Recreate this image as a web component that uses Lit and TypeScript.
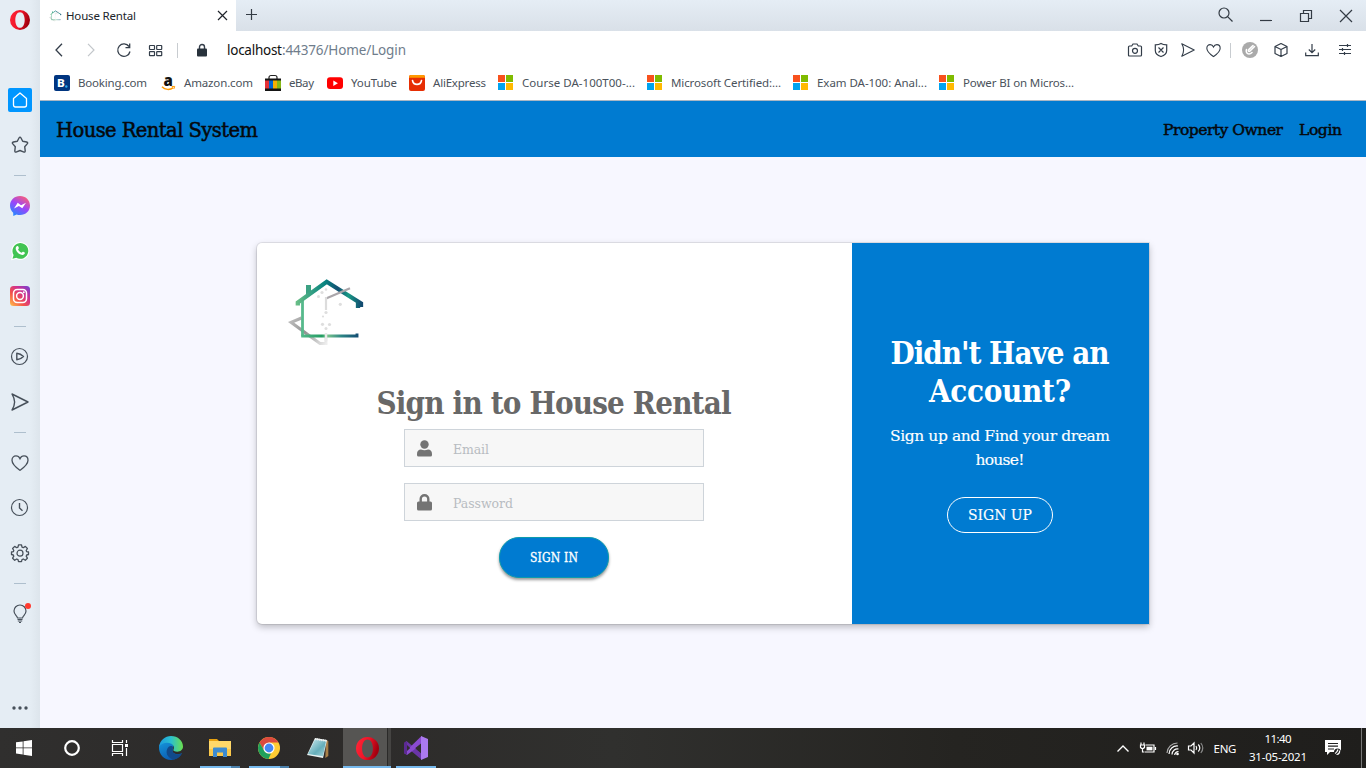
import { LitElement, html, svg, css } from "lit";
import { customElement, property } from "lit/decorators.js";

/* Text run whose tracking is computed so that it fills a given width. */
@customElement("fit-text")
class FitText extends LitElement {
  @property({ type: Number }) w = 100;
  @property() text = "";
  static styles = css`
    :host { display: inline-block; white-space: nowrap; flex: none; text-align: left; }
  `;
  render() {
    return html`<span>${this.text}</span>`;
  }
  updated() {
    const span = this.renderRoot.querySelector("span")!;
    this.style.width = `${this.w}px`;
    span.style.letterSpacing = "0px";
    const natural = span.getBoundingClientRect().width;
    const gaps = Math.max(1, this.text.length - 1);
    span.style.letterSpacing = `${(this.w - natural) / gaps}px`;
  }
}

const fit = (text: string, w: number) => html`<fit-text .text=${text} .w=${w}></fit-text>`;

const icon = (w: number, h: number, body: unknown) =>
  html`<svg class="i" width=${w} height=${h} viewBox="0 0 ${w} ${h}" fill="none" stroke="currentColor" stroke-width="1.2">${body}</svg>`;

const opera = (s: number) => html`<svg class="i" width=${s} height=${s} viewBox="0 0 20 20">
  <defs>
    <linearGradient id="op" x1="0" x2="1" y1="0" y2="0.3"><stop offset="0" stop-color="#ff2638" /><stop offset=".55" stop-color="#f01428" /><stop offset="1" stop-color="#a3000f" /></linearGradient>
  </defs>
  <path fill="url(#op)" fill-rule="evenodd" d="M10 0a10 10 0 1 0 0 20a10 10 0 1 0 0-20zM10 2.2c3 0 4.700 3.500 4.700 7.800s-1.700 7.800-4.700 7.800s-4.700-3.500-4.700-7.800s1.700-7.800 4.700-7.800z" />
</svg>`;

const heart = (s: number) =>
  html`<svg class="i" width=${s} height=${s} viewBox="0 0 18 18" fill="none" stroke="currentColor" stroke-width="1.3"><path d="M9 16.3C6 14.2 1 10.8 1 6.3C1 3.6 2.7 1.9 5 1.9c1.900 0 3.300 1.200 4 2.800C9.700 3.100 11.100 1.900 13 1.900c2.300 0 4 1.700 4 4.400c0 4.500-5 7.900-8 10z" /></svg>`;

const plane = (s: number) =>
  html`<svg class="i" width=${s} height=${s} viewBox="0 0 18 18" fill="none" stroke="currentColor" stroke-width="1.4" stroke-linejoin="round"><path d="M1 1L17 9L1 17C4.500 11 4.500 7 1 1z" /></svg>`;

const msLogo = html`<svg class="i" width="16" height="16" viewBox="0 0 16 16">
  <path fill="#f8511d" d="M0 0h7v7h-7z" /><path fill="#7fbb00" d="M8 0h7v7h-7z" />
  <path fill="#00a3ef" d="M0 8h7v7h-7z" /><path fill="#ffb900" d="M8 8h7v7h-7z" />
</svg>`;

const booking = html`<svg class="i" width="16" height="16" viewBox="0 0 16 16">
  <rect width="16" height="16" rx="2" fill="#003580" />
  <text x="3.200" y="12.300" font-size="11.500" font-weight="900" font-family="Roboto, sans-serif" fill="#fff">B</text>
  <circle cx="12.300" cy="11.500" r="1.200" fill="#2aa8ee" />
</svg>`;

const amazon = html`<svg class="i" width="16" height="16" viewBox="0 0 16 16">
  <text x="3.500" y="10.600" font-size="15" font-weight="800" font-family="Open Sans, sans-serif" fill="#111">a</text>
  <path d="M2 11.800C5 15 10 15.200 13.300 12.600" fill="none" stroke="#f90" stroke-width="1.500" /><path d="M11.700 11.500l3-.1l-.8 2.500" fill="none" stroke="#f90" />
</svg>`;

const ebay = html`<svg class="i" width="16" height="16" viewBox="0 0 16 16">
  <path d="M4 4V2.500a2 2 0 0 1 2-2h4a2 2 0 0 1 2 2v1.500" fill="none" stroke="#222" stroke-width="1.200" />
  <path d="M0 3.500h16v12.500h-16z" fill="#151515" />
  <path d="M0 5.500h4v8h-4z" fill="#e53238" /><path d="M4 5.500h4v8h-4z" fill="#0064d2" /><path d="M8 5.500h4v8h-4z" fill="#f5af02" /><path d="M12 5.500h4v8h-4z" fill="#86b817" />
</svg>`;

const youtube = html`<svg class="i" width="16" height="16" viewBox="0 0 16 16">
  <rect x="0" y="2.300" width="16" height="11.700" rx="3" fill="#f00" /><path d="M6.300 5.500l4.600 2.700l-4.600 2.700z" fill="#fff" />
</svg>`;

const ali = html`<svg class="i" width="16" height="16" viewBox="0 0 16 16">
  <rect width="16" height="16" rx="2" fill="#e62e04" /><path d="M0 2.800V2a2 2 0 0 1 2-2h12a2 2 0 0 1 2 2v.8z" fill="#ff9a00" />
  <path d="M3.500 5.500c1 5.200 8 5.200 9 0" fill="none" stroke="#fff" stroke-width="1.600" stroke-linecap="round" />
</svg>`;

const bookmarks: [unknown, string, number, number][] = [
  [booking, "Booking.com", 69, 106],
  [amazon, "Amazon.com", 69, 105],
  [ebay, "eBay", 25, 62],
  [youtube, "YouTube", 46, 82],
  [ali, "AliExpress", 53, 89],
  [msLogo, "Course DA-100T00-...", 113, 149],
  [msLogo, "Microsoft Certified:...", 110, 146],
  [msLogo, "Exam DA-100: Anal...", 110, 146],
  [msLogo, "Power BI on Micros...", 111, 140],
];

const house = (w: number, h: number) => html`<svg class="i" width=${w} height=${h} viewBox="287 277 80 72" fill="none">
  <defs>
    <linearGradient id="hr" gradientUnits="userSpaceOnUse" x1="297" y1="0" x2="363" y2="0"><stop offset="0" stop-color="#67bd86" /><stop offset=".42" stop-color="#078480" /><stop offset=".62" stop-color="#124f72" /><stop offset=".78" stop-color="#179a85" /><stop offset=".98" stop-color="#134a70" /></linearGradient>
    <linearGradient id="hb" gradientUnits="userSpaceOnUse" x1="301" y1="0" x2="359" y2="0"><stop offset="0" stop-color="#55b98b" /><stop offset=".36" stop-color="#229c62" /><stop offset=".45" stop-color="#7bc48c" /><stop offset=".7" stop-color="#2c8585" /><stop offset="1" stop-color="#124a72" /></linearGradient>
    <linearGradient id="hg" gradientUnits="userSpaceOnUse" x1="290" y1="320" x2="326" y2="344"><stop offset="0" stop-color="#bdbdbd" /><stop offset=".45" stop-color="#929292" /><stop offset="1" stop-color="#eee" /></linearGradient>
  </defs>
  <path d="M301.500 318L291 322.300L320 343.500H326V337" stroke="url(#hg)" stroke-width="3" />
  <path d="M308.500 295V285" stroke="#3ca183" stroke-width="5" />
  <path d="M302.500 300V336.300" stroke="#56b98c" stroke-width="2.800" />
  <path d="M301.200 336H357V333.500" stroke="url(#hb)" stroke-width="2.900" />
  <path d="M297.800 305.500V302.500L326.700 281.800L361 303.500V307M358 301V308" stroke="url(#hr)" stroke-width="4.300" />
  <path d="M326 298.500L350 288.300" stroke="#aaa6aa" stroke-width="2.200" />
  <path d="M326 297V310" stroke="#dcdcdc" stroke-width="2.200" />
  <g fill="#dedede"><circle cx="326" cy="289.500" r="1.300" /><circle cx="322" cy="292.500" r="1.600" /><circle cx="318.500" cy="296.500" r="1.500" /><circle cx="340.300" cy="304.300" r="1.600" /><circle cx="326" cy="312.500" r="1.600" /><circle cx="323" cy="316.500" r="1.100" /><circle cx="322.500" cy="324.300" r="1.600" /><circle cx="329.500" cy="324.500" r="1.600" /><circle cx="326" cy="328.500" r="1.500" /></g>
  <path d="M326 333V341" stroke="#e9e9e9" stroke-width="2.500" />
</svg>`;

const star = icon(18, 18, svg`<path stroke-width="1.400" stroke-linejoin="round" d="M8 2Q9 .3 10 2L11.700 5.300L15.600 6Q17.400 6.500 16.200 7.900L13.700 10.700L14.200 14.900Q14.100 16.700 12.400 15.900L9 14.500L5.600 15.900Q3.900 16.700 3.800 14.900L4.300 10.700L1.800 7.900Q.6 6.500 2.400 6L6.300 5.300z" />`);

const messenger = html`<svg class="i" width="22" height="22" viewBox="0 0 22 22">
  <defs><linearGradient id="ms" x1=".2" y1="1" x2=".8" y2="0"><stop offset="0" stop-color="#1f8cff" /><stop offset=".5" stop-color="#9a45fb" /><stop offset="1" stop-color="#ff6070" /></linearGradient></defs>
  <path fill="url(#ms)" d="M11 1C5.300 1 1 5.100 1 10.600c0 2.900 1.200 5.400 3.200 7.100L4.300 21l3.300-1.500c1.100.4 2.200.6 3.400.6c5.700 0 10-4.100 10-9.500S16.700 1 11 1z" />
  <path fill="#fff" d="M5 13.500L8.700 7.800L12 10.300L17 7.700L13.300 13.300L9.900 10.900z" />
</svg>`;

const whatsapp = html`<svg class="i" width="20" height="20" viewBox="0 0 20 20">
  <path fill="#fff" d="M1 19.200L2.300 14A9 9 0 1 1 6.300 18z" /><path fill="#42c453" d="M2.500 17.700L3.600 14A7.900 7.900 0 1 1 6.300 16.700z" />
  <path fill="#fff" d="M6.900 5.300c.7-.6 1.200-.3 1.400.3l.6 1.500c.1.500-.6 1-.8 1.300c.9 1.700 2 2.700 3.600 3.300l1-1c.4-.3 2 .6 2.200.9c.3 1-.8 2.300-2 2.400c-3.600.1-7.300-3.600-7.200-6.700c0-.8.600-1.600 1.200-2z" />
</svg>`;

const instagram = html`<svg class="i" width="20" height="20" viewBox="0 0 20 20">
  <defs><linearGradient id="ig" x1="0" y1="1" x2="1" y2="0"><stop offset="0" stop-color="#ffc44c" /><stop offset=".35" stop-color="#f4544a" /><stop offset=".65" stop-color="#cf3190" /><stop offset="1" stop-color="#6c43d8" /></linearGradient></defs>
  <rect width="20" height="20" rx="3.500" fill="url(#ig)" /><g fill="none" stroke="#fff" stroke-width="1.500"><rect x="3.500" y="3.500" width="13" height="13" rx="3.700" /><circle cx="10" cy="10" r="3.400" /></g><circle cx="13.800" cy="6.200" r="1" fill="#fff" />
</svg>`;

/* Eight-toothed cog: a wavy ring round a small hub. */
const gear = icon(18, 18, svg`<path stroke-width="1.300" stroke-linejoin="round" d="M7.500 .8h3l.5 2.300l1.300.6l2-1.300l2.100 2.100l-1.200 2l.5 1.200l1.800.3v2.500l-1.800.5l-.5 1.200l1.200 2l-2.100 2.100l-2-1.300l-1.300.6l-.5 2h-3l-.5-2l-1.300-.6l-2 1.300l-2.100-2.100l1.200-2l-.5-1.200L.5 10.500V8l1.800-.3l.5-1.200l-1.200-2l2.100-2.100l2 1.300l1.300-.6z" /><circle cx="9" cy="9.200" r="3" />`);

const taskWave = html`<svg class="i" width="26" height="26" viewBox="0 0 26 26">
  <defs>
    <linearGradient id="e1" x1="0" x2="1"><stop offset="0" stop-color="#1c9ae0" /><stop offset=".5" stop-color="#2bc0cf" /><stop offset="1" stop-color="#6be04e" /></linearGradient>
    <linearGradient id="e2" x1="0" y1="0" x2=".6" y2="1"><stop offset="0" stop-color="#1597dc" /><stop offset="1" stop-color="#0b58ae" /></linearGradient>
  </defs>
  <path fill="url(#e2)" d="M1 12C2 7 7 5.500 11 7c4 1.500 5 4 4 6c-1 2-1 5 3 6c3 .8 5-.4 6-.9C21.500 23 17 25 13 25C6 25 .6 19 1 12z" />
  <path fill="#114a8b" d="M10.500 12c-4 4.500-1.500 11 5 12.600c4-.6 7-3.500 8.300-6.200c-3.500 2-8.300 1.200-9.300-2.200c-.5-1.800.6-2.800.5-4.200c-.7-1.300-3-1.500-4.500 0z" />
  <path fill="url(#e1)" d="M1 12C2 5 7 1 13 1c7 0 12 5 12 10.500c0 4.500-5 6.300-9 4.400c-1.600-.8.600-1.600-.3-4.600C14.400 7.300 5 5.500 1 12z" />
</svg>`;

const explorer = html`<svg class="i" width="24" height="22" viewBox="0 0 24 22">
  <path fill="#e8a210" d="M1 2h8l2 2h-10z" /><path fill="#ffd869" d="M1 4h22v15h-22z" /><path fill="#fbc84a" d="M1 12h22v7h-22z" />
  <path fill="#3d8bd0" d="M5 20v-8.500q0-1 1-1h12q1 0 1 1v8.500h-4v-4.500h-6v4.500z" />
</svg>`;

const chrome = html`<svg class="i" width="24" height="24" viewBox="0 0 24 24">
  <circle cx="12" cy="12" r="11" fill="#fc3" />
  <path fill="#dc4a3e" d="M2.500 6.500A11 11 0 0 1 21.500 6.500H12L7.200 14.800z" /><path fill="#1fa05c" d="M2.500 6.500L7.200 14.800Q9 17.500 12 17.500l2 .1L11.500 23A11 11 0 0 1 2.500 6.500z" />
  <circle cx="12" cy="12" r="5.600" fill="#fff" /><circle cx="12" cy="12" r="4.400" fill="#4587f4" />
</svg>`;

const notepad = html`<svg class="i" width="24" height="24" viewBox="0 0 24 24">
  <defs><linearGradient id="np" x2="1" y2="1"><stop offset="0" stop-color="#d1edf1" /><stop offset=".6" stop-color="#65aeba" /><stop offset="1" stop-color="#a7d5dc" /></linearGradient></defs>
  <path fill="#a87f48" d="M20 4l2.300 1v15l-3 2z" /><path fill="#e9f2f2" d="M1 19L9 2l12 2l-4 18z" /><path fill="url(#np)" d="M2 18L9 3.500l11 1.700l-3 15z" /><path d="M9 3l12 2" stroke="#eee" stroke-width="2" stroke-dasharray="1 1" />
</svg>`;

const studio = html`<svg class="i" width="26" height="26" viewBox="0 0 26 26">
  <path fill="#6a35a8" d="M1 8l2.500-2L19 19v6L1 10z" /><path fill="#8a4bd0" d="M1 18L18.500 1L20 8L4 20z" /><path fill="#5b2a91" d="M1 8L4 6V20L1 18z" />
  <path fill="#ab79ef" d="M18 1l7 3v18l-7 3z" /><path fill="#312e2d" d="M18 8.500v9L12.300 13zM4 10v6l3.200-3z" />
</svg>`;

const rule = html`<span class="rule"></span>`;

@customElement("app-root")
class AppRoot extends LitElement {
  static styles = css`
    :host { display: grid; grid-template-columns: 40px 1fr; grid-template-rows: 728px 40px; width: 1366px; height: 768px; overflow: hidden; font-family: "Noto Sans", sans-serif; color: #222b36; }
    * { box-sizing: border-box; }
    .i { display: block; flex: none; overflow: visible; }
    .side { display: grid; grid-template-rows: 40px 38px 44px 46px 15px 45px 46px 44px 16px 45px 46px 15px 45px 45px 45px 16px 45px 1fr 40px; justify-items: center; align-items: center; background: linear-gradient(90deg, #e5edf4 75%, #dde5ec); color: #47505a; }
    .home { display: grid; place-items: center; width: 24px; height: 24px; border-radius: 2px; background: #0096ff; color: #fff; }
    .rule { width: 12px; height: 1px; background: #aebfcd; }
    .main { display: grid; grid-template-rows: 31px 38px 32px 56px 1fr; min-width: 0; }
    .tabs { display: flex; align-items: center; background: linear-gradient(#e5edf5, #d9e0e8); color: #333b44; }
    .tab { display: flex; align-items: center; width: 196px; height: 31px; padding: 0 8px 0 9px; background: #fff; font-size: 11.5px; color: #20242b; }
    .tab fit-text { margin-left: 4px; }
    .tab .x { margin-left: auto; }
    .plus { margin: 0 0 2px 10px; }
    .win { display: grid; grid-template-columns: repeat(4, 40px); justify-items: center; align-items: center; margin-left: auto; }
    .win .lens { padding: 0 1px 2px 0; }
    .bar { display: flex; align-items: center; background: #fff; color: #333d49; }
    .nav { display: grid; grid-template-columns: 38px 26px 39px 25px 19px 30px 10px 1fr; align-items: center; justify-items: center; width: 380px; }
    .vr { width: 1px; height: 15px; background: #c8ccd0; }
    .url { display: flex; justify-self: start; font-size: 13.5px; line-height: 20px; color: #111; }
    .url .rest { color: #6f7d8c; }
    .tools { display: grid; grid-template-columns: 26px 26px 27px 24px 10px 30px 31px 32px 34px; justify-items: center; align-items: center; margin-left: auto; margin-right: 4px; }
    .marks { display: flex; align-items: center; padding: 0 0 4px 14px; border-bottom: 1px solid #aab7c4; background: #fff; font-size: 11.5px; color: #4a525b; }
    .mark { display: flex; align-items: center; gap: 8px; flex: none; }
    .slab { font-family: "Roboto Slab", "DejaVu Serif", serif; }
    .narrow { font-family: "Roboto Slab", "DejaVu Serif Condensed", "DejaVu Serif", serif; }
    .site { display: flex; align-items: center; padding: 2px 24px 0 16px; background: #007bd1; color: #06080c; -webkit-text-stroke: 0.5px #06080c; }
    .brand { font-size: 19.5px; }
    .links { display: flex; gap: 16px; margin-left: auto; font-size: 15.5px; }
    .page { display: flex; align-items: flex-start; padding: 86px 217px 0; background: #f7f7ff; }
    .card { display: grid; grid-template-columns: 595px 297px; width: 892px; height: 381px; border-radius: 5px 0 0 5px; background: #fff; box-shadow: 0 0 0 1px rgba(0, 0, 0, 0.08), 0 3px 7px rgba(0, 0, 0, 0.25); }
    .left { display: flex; flex-direction: column; align-items: center; padding-right: 1px; }
    .logo { align-self: flex-start; padding: 34px 0 0 30px; height: 140px; }
    .title { height: 46px; line-height: 40px; font-size: 31px; font-weight: 700; color: #686868; }
    .field { display: flex; align-items: center; width: 300px; height: 38px; margin-bottom: 16px; padding-left: 12px; border: 1px solid #ced4da; background: #f7f7f7; color: #747474; }
    .field fit-text { margin: 2px 0 0 21px; font-size: 12.5px; color: #b8bcc1; }
    .signin { display: flex; align-items: center; justify-content: center; width: 110px; height: 41px; border: 1px solid #0d9bac; border-radius: 20px; background: #007bd1; color: #fff; font-size: 12px; -webkit-text-stroke: 0.3px #fff; box-shadow: 0 2px 3px rgba(0, 0, 0, 0.4); }
    .right { display: flex; flex-direction: column; align-items: center; padding: 91px 1px 0 0; background: #007bd1; color: #fff; }
    .h { height: 38.4px; line-height: 38px; font-size: 31px; font-weight: 700; }
    .p { height: 24px; line-height: 24px; font-size: 15.5px; -webkit-text-stroke: 0.15px #fff; }
    .p.first { margin-top: 13px; }
    .signup { display: flex; align-items: center; justify-content: center; width: 106px; height: 36px; margin-top: 25px; border: 1px solid #fff; border-radius: 18px; font-size: 15.5px; -webkit-text-stroke: 0.15px #fff; }
    .task { grid-column: 1 / 3; display: flex; background: linear-gradient(90deg, #302f2e, #2c2a29 20%, #30302e 45%, #252421 70%, #1f1e1c); color: #fff; }
    .slot { display: grid; place-items: center; width: 48px; height: 40px; }
    .apps { display: flex; gap: 1px; margin-left: 3px; }
    .apps .slot { grid-template-rows: 38px 2px; padding-top: 0; justify-items: center; }
    .apps .i { margin-top: 2px; }
    .line { width: 40px; height: 2px; background: #76b9ed; }
    .line.two { background: linear-gradient(90deg, #76b9ed 31px, #4b80ab 31px); }
    .line.full { width: 48px; }
    .active { background: linear-gradient(90deg, #565553 44px, #2b2a29 44px, #2b2a29 45px, #454442 45px); }
    .tray { display: grid; grid-template-columns: 24px 25px 24px 22px 36px 70px 40px; justify-items: center; align-items: center; margin-left: auto; font-size: 11.5px; }
    .tray > .i:first-child, .tray > .i:nth-child(2), .tray > .i:nth-child(3) { margin-right: 2px; }
    .clock { display: flex; flex-direction: column; align-items: center; line-height: 18px; }
    .edge { width: 1px; height: 40px; margin: 0 4px 0 8px; background: #777; }
  `;

  render() {
    return html`
      <nav class="side">
        ${opera(20)}<span></span>
        <span class="home">${icon(16, 16, svg`<path stroke-width="1.300" stroke-linejoin="round" d="M1.500 6.500L8 1L14.500 6.500V13Q14.500 15 12.500 15H3.500Q1.500 15 1.500 13z" />`)}</span>
        ${star}${rule}${messenger}${whatsapp}${instagram}${rule}
        ${icon(18, 18, svg`<circle cx="8.500" cy="8.500" r="8" /><path stroke-width="1.400" stroke-linejoin="round" d="M5.800 5.300Q9.500 5.600 12.500 8.500Q9.500 11.500 5.800 11.700z" />`)}
        ${plane(18)}${rule}${heart(18)}
        ${icon(18, 18, svg`<circle cx="8.500" cy="8.500" r="8" /><path stroke-width="1.400" d="M8.500 4v5l3 2.800" />`)}
        ${gear}${rule}
        ${icon(18, 20, svg`<path d="M6.500 14C6 11.500 3 10.500 3 7a6 6 0 0 1 12 0C15 10.500 12 11.500 11.500 14z" /><path d="M6.500 15.500h5M6.800 17h4.400M8 18.500h2" /><circle cx="17" cy="2" r="3" fill="#ff3b30" stroke="none" />`)}
        <span></span>
        ${icon(18, 4, svg`<g fill="currentColor" stroke="none"><circle cx="3" cy="2" r="1.700" /><circle cx="9" cy="2" r="1.700" /><circle cx="15" cy="2" r="1.700" /></g>`)}
      </nav>

      <main class="main">
        <header class="tabs">
          <div class="tab">${house(13, 12)}${fit("House Rental", 70)}<span class="x">${icon(11, 11, svg`<path d="M1 1l9 9M10 1l-9 9" />`)}</span></div>
          <span class="plus">${icon(11, 11, svg`<path d="M5.500 0v11M0 5.500h11" />`)}</span>
          <div class="win">
            <span class="lens">${icon(15, 15, svg`<circle cx="6" cy="6" r="5" /><path d="M9.600 9.600l4.900 4.900" />`)}</span>
            ${icon(12, 12, svg`<path d="M0 10.500h12" />`)}
            ${icon(12, 12, svg`<path d="M.5 3.500h8v8h-8zM3.500 3.500v-3h8v8h-3" />`)}
            ${icon(12, 12, svg`<path d="M0 0l12 12M12 0l-12 12" />`)}
          </div>
        </header>

        <div class="bar">
          <div class="nav">
            ${icon(8, 14, svg`<path stroke-width="1.300" d="M7 .8L1 7l6 6.200" />`)}
            ${icon(8, 14, svg`<path stroke="#c2c6ca" d="M1 .8L7 7l-6 6.200" />`)}
            ${icon(14, 14, svg`<path stroke-width="1.300" d="M13 8.500A6.200 6.200 0 1 1 12 3.500M12.700 .5v4.200h-4.200" />`)}
            ${icon(13, 11, svg`<rect x=".5" y=".5" width="5" height="4" rx=".5" /><rect x="7.700" y=".5" width="5" height="4" rx=".5" /><rect x=".5" y="6.700" width="5" height="4" rx=".5" /><rect x="7.700" y="6.700" width="5" height="4" rx=".5" />`)}
            <span class="vr"></span>
            ${icon(10, 13, svg`<path d="M2.500 6V3a2.500 2.500 0 0 1 5 0V6" stroke-width="1.400" /><rect y="4.500" width="10" height="8" rx="1" fill="#28323c" stroke="none" />`)}
            <span></span>
            <div class="url">${fit("localhost", 55)}<span class="rest">${fit(":44376/Home/Login", 124)}</span></div>
          </div>
          <div class="tools">
            ${icon(14, 14, svg`<path d="M1.500 3h2.200l1.300-2h4l1.300 2h2.200q1 0 1 1v8q0 1-1 1h-11q-1 0-1-1V4q0-1 1-1z" /><circle cx="7" cy="7.800" r="2.500" />`)}
            ${icon(14, 14, svg`<path d="M7 .5C9 1.800 11 1.800 12.700 1.800V7.500C12.700 11 10 12.500 7 13.500C4 12.500 1.300 11 1.300 7.500V1.800C3 1.800 5 1.800 7 .5zM4.500 4.500l5 5M9.500 4.500l-5 5" />`)}
            ${plane(14)}${heart(15)}
            <span class="vr"></span>
            ${icon(16, 16, svg`<circle cx="8" cy="8" r="8" fill="#aaa" stroke="none" /><path stroke="#fff" stroke-width="1.600" stroke-linecap="round" d="M12.500 4.500L8 9q-1 1-1.500 0q-.5-.7.500-1.700L11 3.500M4.500 7.500C3.500 10 5 12 7 12q1.500 0 3-1.500" />`)}
            ${icon(14, 14, svg`<path stroke-linejoin="round" d="M7 .5l6 3v7l-6 3l-6-3v-7zM1 3.500l6 3l6-3M7 6.500v7" />`)}
            ${icon(14, 14, svg`<path d="M7 1v8.500M3.800 6.500L7 9.700l3.200-3.200M.7 9.500V12.700h12.600V9.500" />`)}
            ${icon(12, 12, svg`<path d="M0 1.500h12M0 5.500h12M0 9.500h12M8.500 0v3M3.500 4v3M5.500 8v3" />`)}
          </div>
        </div>

        <div class="marks">
          ${bookmarks.map(([ic, name, w, cell]) => html`<span class="mark" style="width:${cell}px">${ic}${fit(name, w)}</span>`)}
        </div>

        <div class="site slab">
          <span class="brand">${fit("House Rental System", 202)}</span>
          <span class="links">${fit("Property Owner", 120)}${fit("Login", 43)}</span>
        </div>

        <section class="page slab">
          <div class="card">
            <div class="left">
              <div class="logo">${house(80, 72)}</div>
              <div class="title narrow">${fit("Sign in to House Rental", 355)}</div>
              <div class="field">
                ${icon(15, 17, svg`<g fill="#747474" stroke="none"><circle cx="7.500" cy="4.500" r="4.200" /><path d="M0 14c0-3 1.500-4.500 4-4.500q3.500 1.300 7 0c2.500 0 4 1.500 4 4.500v1q0 1.500-1.500 1.500h-12q-1.500 0-1.500-1.500z" /></g>`)}
                ${fit("Email", 36)}
              </div>
              <div class="field">
                ${icon(15, 17, svg`<path stroke="#747474" stroke-width="2.400" d="M3.700 8V5a3.800 3.800 0 0 1 7.600 0v3" /><rect y="7.500" width="15" height="9" rx="1.500" fill="#747474" stroke="none" />`)}
                ${fit("Password", 60)}
              </div>
              <div class="signin narrow">${fit("SIGN IN", 48)}</div>
            </div>
            <div class="right">
              <div class="h narrow">${fit("Didn't Have an", 219)}</div>
              <div class="h narrow">${fit("Account?", 142)}</div>
              <div class="p first">${fit("Sign up and Find your dream", 220)}</div>
              <div class="p">${fit("house!", 49)}</div>
              <div class="signup narrow">${fit("SIGN UP", 64)}</div>
            </div>
          </div>
        </section>
      </main>

      <footer class="task">
        <span class="slot">${icon(16, 16, svg`<g fill="#fff" stroke="none"><path d="M0 2.300L6.700 1.400V7.500H0zM7.500 1.300L16 0V7.500H7.500zM0 8.300H6.700V14.500L0 13.600zM7.500 8.300H16V16L7.500 14.700z" /></g>`)}</span>
        <span class="slot">${icon(16, 16, svg`<circle cx="8" cy="8" r="6.800" stroke-width="2.200" />`)}</span>
        <span class="slot">${icon(16, 16, svg`<path d="M.5 0v2.500h10V0M.5 4.500h10v7h-10zM.5 16v-2.500h10V16M14.500 0v3M14.500 8v8" /><path fill="#fff" stroke="none" d="M13 4h3v3h-3z" />`)}</span>
        <div class="apps">
          <span class="slot">${taskWave}<span></span></span>
          <span class="slot">${explorer}<span class="line two"></span></span>
          <span class="slot">${chrome}<span class="line two"></span></span>
          <span class="slot">${notepad}<span></span></span>
          <span class="slot active">${opera(23)}<span class="line full"></span></span>
          <span class="slot">${studio}<span class="line"></span></span>
        </div>
        <div class="tray">
          ${icon(12, 7, svg`<path stroke-width="1.400" d="M.5 6.500L6 1l5.500 5.500" />`)}
          ${icon(16, 12, svg`<path d="M5.500 3h8.500v7h-9M15.500 5v3M1 .5v2.500M4 .5v2.500M.5 3h4v2.500q-2 2-4 0zM2.500 6.500V10h2" /><path fill="#fff" stroke="none" d="M6.500 4.700h6v3.700h-6z" />`)}
          ${icon(13, 13, svg`<path stroke="#aaa" d="M1 11A10.500 10.500 0 0 1 11.500 1" /><path d="M3 12A8 8 0 0 1 12 4M6 12.500A5.500 5.500 0 0 1 12.500 7M8.700 13A3.500 3.500 0 0 1 12.500 9.700" /><circle cx="11.500" cy="12" r="1.300" fill="#fff" stroke="none" />`)}
          ${icon(16, 12, svg`<path d="M.5 4h2.500l3-3v10l-3-3H.5zM8 4q1.500 2 0 4M10.300 2.500q3 3.500 0 7" /><path stroke="#888" d="M12.800 1q4 5 0 10" />`)}
          ${fit("ENG", 23)}
          <span class="clock">${fit("11:40", 27)}${fit("31-05-2021", 58)}</span>
          ${icon(16, 16, svg`<path fill="#fff" stroke="none" d="M0 0h16v12h-11l-3 3v-3h-2z" /><path stroke="#222" d="M3 3.500h10M3 6.200h10M3 9h6" /><circle cx="12.500" cy="12" r="3.500" fill="#222" stroke="none" /><path d="M10 13.500q2-1 3-4M11.500 14.500q3.500-.5 3-4" />`)}
        </div>
        <span class="edge"></span>
      </footer>
    `;
  }
}
